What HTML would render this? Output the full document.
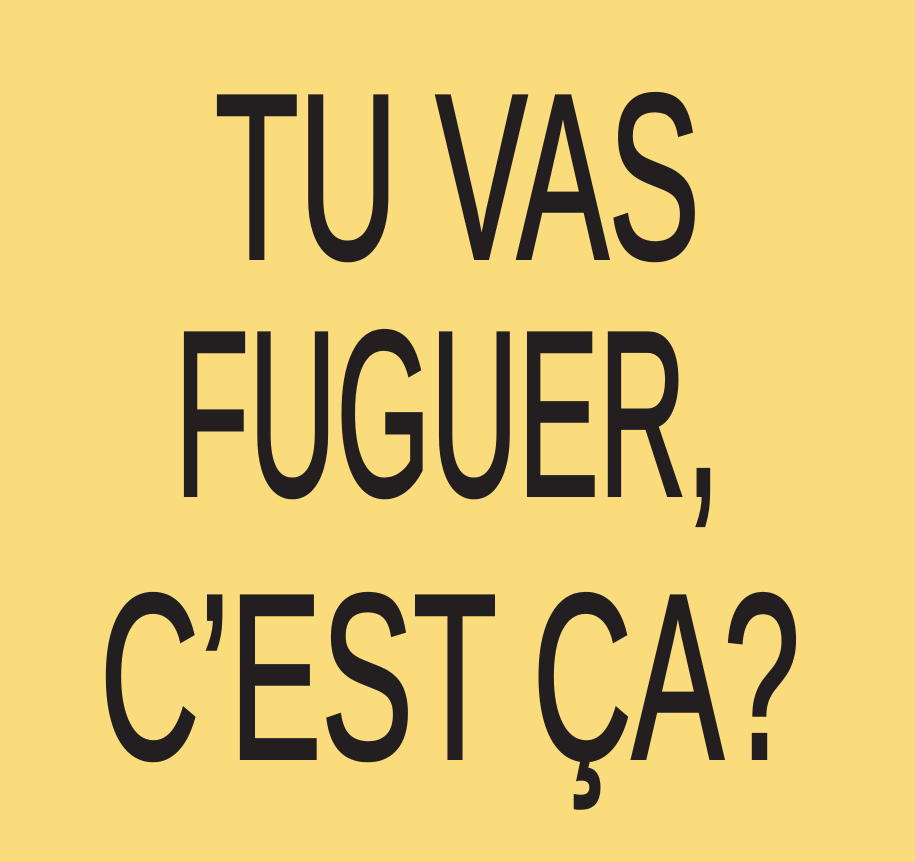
<!DOCTYPE html>
<html><head><meta charset="utf-8"><style>
html,body{margin:0;padding:0;width:915px;height:862px;background:#fbdc7c;overflow:hidden}
svg{display:block}
text{font-family:"Liberation Sans Narrow","Liberation Sans",sans-serif;font-weight:normal;fill:#231f20;stroke:#231f20;stroke-width:4}
</style></head><body>
<svg width="915" height="862" viewBox="0 0 915 862">
<rect width="915" height="862" fill="#fbdc7c"/>
<text x="215" y="258" font-size="235" textLength="485" lengthAdjust="spacingAndGlyphs">TU VAS</text>
<text x="175" y="495" font-size="235" textLength="545" lengthAdjust="spacingAndGlyphs">FUGUER,</text>
<text x="100" y="758" font-size="235" textLength="700" lengthAdjust="spacingAndGlyphs">C’EST ÇA?</text>
</svg>
</body></html>
